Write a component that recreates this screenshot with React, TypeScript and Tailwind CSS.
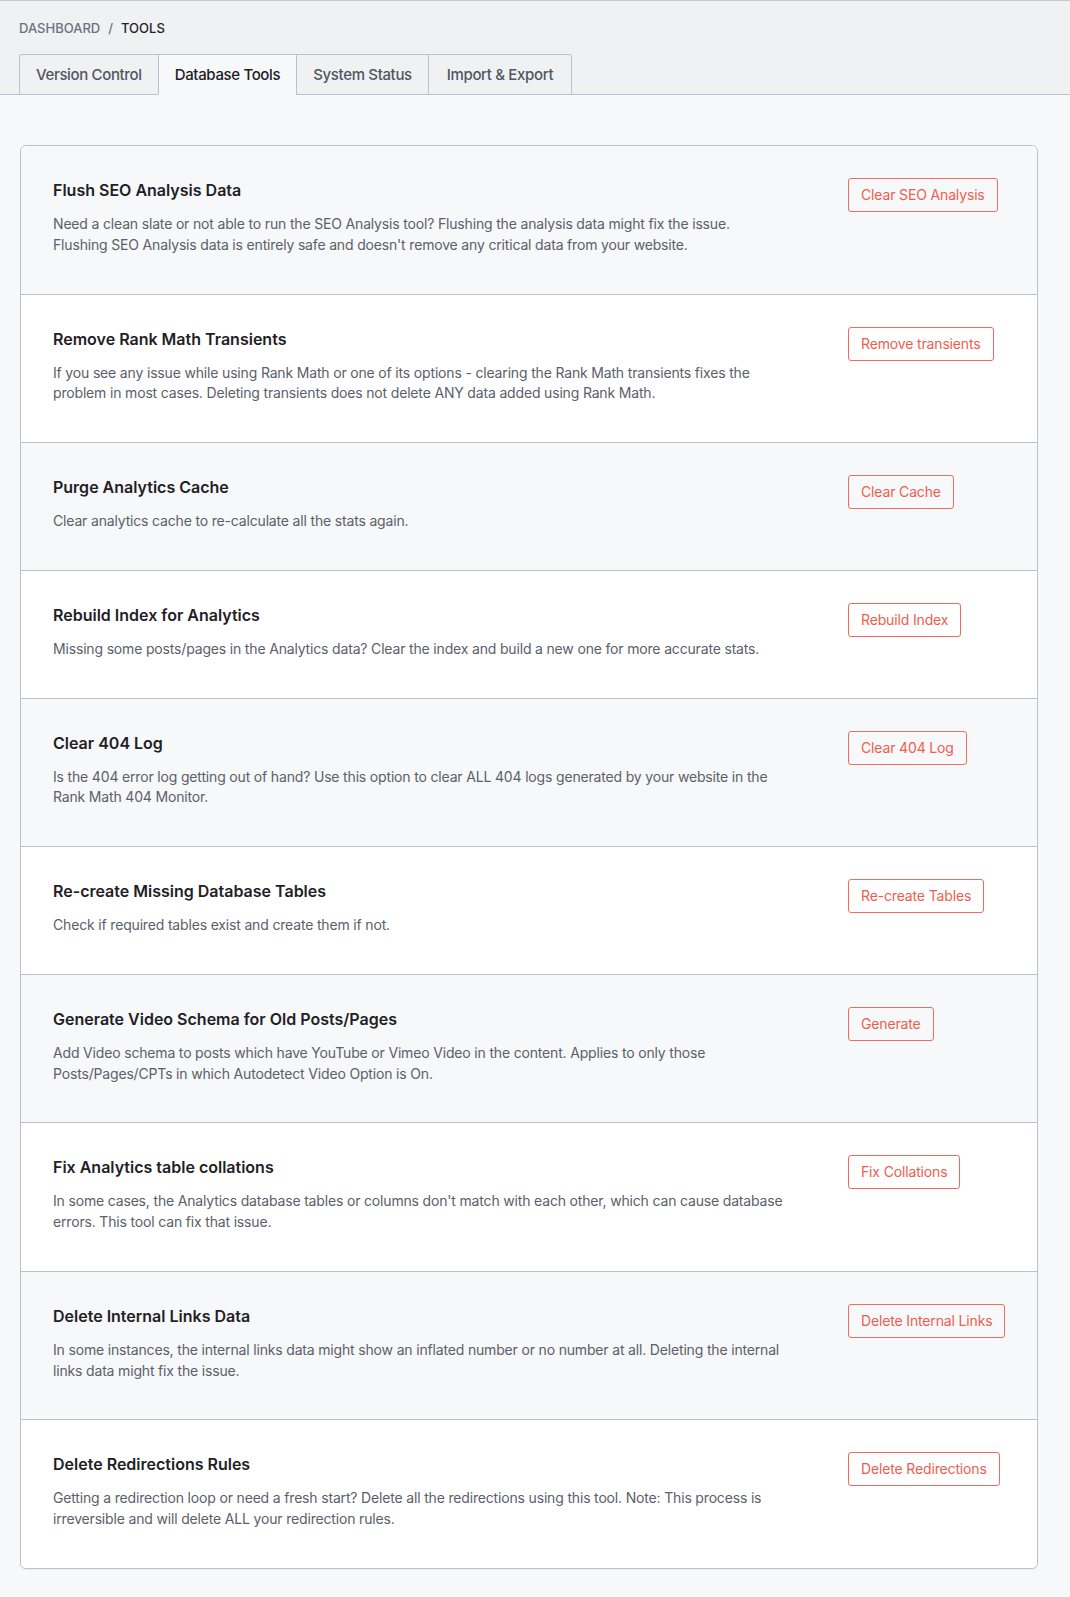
import { useState } from 'react';

const tabs = ['Version Control', 'Database Tools', 'System Status', 'Import & Export'];

const tools = [
  {
    title: 'Flush SEO Analysis Data',
    description:
      "Need a clean slate or not able to run the SEO Analysis tool? Flushing the analysis data might fix the issue. Flushing SEO Analysis data is entirely safe and doesn't remove any critical data from your website.",
    button: 'Clear SEO Analysis',
  },
  {
    title: 'Remove Rank Math Transients',
    description:
      'If you see any issue while using Rank Math or one of its options - clearing the Rank Math transients fixes the problem in most cases. Deleting transients does not delete ANY data added using Rank Math.',
    button: 'Remove transients',
  },
  {
    title: 'Purge Analytics Cache',
    description: 'Clear analytics cache to re-calculate all the stats again.',
    button: 'Clear Cache',
  },
  {
    title: 'Rebuild Index for Analytics',
    description:
      'Missing some posts/pages in the Analytics data? Clear the index and build a new one for more accurate stats.',
    button: 'Rebuild Index',
  },
  {
    title: 'Clear 404 Log',
    description:
      'Is the 404 error log getting out of hand? Use this option to clear ALL 404 logs generated by your website in the Rank Math 404 Monitor.',
    button: 'Clear 404 Log',
  },
  {
    title: 'Re-create Missing Database Tables',
    description: 'Check if required tables exist and create them if not.',
    button: 'Re-create Tables',
  },
  {
    title: 'Generate Video Schema for Old Posts/Pages',
    description:
      'Add Video schema to posts which have YouTube or Vimeo Video in the content. Applies to only those Posts/Pages/CPTs in which Autodetect Video Option is On.',
    button: 'Generate',
  },
  {
    title: 'Fix Analytics table collations',
    description:
      "In some cases, the Analytics database tables or columns don't match with each other, which can cause database errors. This tool can fix that issue.",
    button: 'Fix Collations',
  },
  {
    title: 'Delete Internal Links Data',
    description:
      'In some instances, the internal links data might show an inflated number or no number at all. Deleting the internal links data might fix the issue.',
    button: 'Delete Internal Links',
  },
  {
    title: 'Delete Redirections Rules',
    description:
      'Getting a redirection loop or need a fresh start? Delete all the redirections using this tool. Note: This process is irreversible and will delete ALL your redirection rules.',
    button: 'Delete Redirections',
  },
];

export default function App() {
  const [active, setActive] = useState(1);

  return (
    <div className="min-h-[1597px] bg-[#f7f8f9] font-['Inter','Liberation_Sans',sans-serif] antialiased">
      {/* Header */}
      <header className="bg-[#f0f1f3] border-t border-[#c5cad1] border-b border-b-[#b9c2ce]">
        <nav className="pl-[19px] pt-[17px] text-[13px] leading-[20px] font-medium uppercase">
          <span className="text-[#6b7280]">Dashboard</span>
          <span className="text-[#6b7280] mx-[8px]">/</span>
          <span className="text-[#1f2328]">Tools</span>
        </nav>
        <div className="flex pl-[19px] mt-[16px] -mb-px">
          {tabs.map((tab, idx) => (
            <button
              key={tab}
              onClick={() => setActive(idx)}
              className={`h-[41px] pt-[2px] px-[16px] text-[15px] tracking-[-0.35px] font-medium border-t border-l border-b border-[#b9c2ce] ${
                idx === 0 ? 'rounded-tl-[3px]' : ''
              } ${idx === tabs.length - 1 ? 'border-r rounded-tr-[3px] px-[18px]' : ''} ${
                idx === active
                  ? 'bg-[#f7f8f9] text-[#1e2024] border-b-[#f7f8f9]'
                  : 'bg-[#f0f1f3] text-[#50565e]'
              }`}
            >
              {tab}
            </button>
          ))}
        </div>
      </header>

      {/* Tools list */}
      <main className="pt-[50px] pb-[31px] pl-[20px] pr-[32px]">
        <div className="border border-[#b9c2ce] rounded-[6px] overflow-hidden shadow-[0_1px_1px_rgba(0,0,0,0.05)]">
          {tools.map((tool, idx) => (
            <div
              key={tool.title}
              className={`flex justify-between px-[32px] pt-[32px] pb-[38px] ${
                idx > 0 ? 'border-t border-[#b9c2ce]' : ''
              } ${idx % 2 === 0 ? 'bg-[#f7f8f9]' : 'bg-white'}`}
            >
              <div className="w-[732px]">
                <h3 className="text-[16px] leading-[24px] font-semibold text-[#1f2126]">{tool.title}</h3>
                <p className="mt-[12px] text-[14px] leading-[20.75px] tracking-[-0.17px] text-[#5b606a]">
                  {tool.description}
                </p>
              </div>
              <div className="w-[157px] shrink-0">
                <button className="h-[34px] px-[12px] text-[14px] tracking-[-0.15px] leading-none text-[#ee5e4e] border border-[#ef6c5e] rounded-[3px] bg-transparent whitespace-nowrap">
                  {tool.button}
                </button>
              </div>
            </div>
          ))}
        </div>
      </main>
    </div>
  );
}
